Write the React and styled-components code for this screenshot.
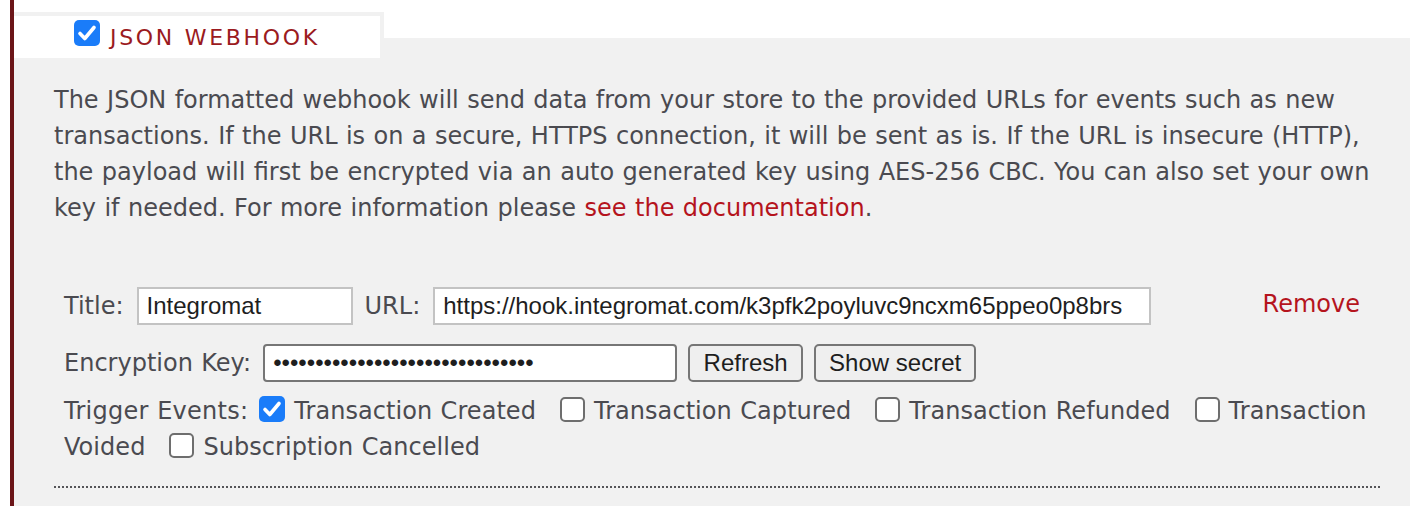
import React from 'react';
import styled, { createGlobalStyle } from 'styled-components';

const GlobalStyle = createGlobalStyle`
	html, body {
		margin: 0;
		padding: 0;
		background: #ffffff;
	}
	body {
		font-family: 'DejaVu Sans', Verdana, sans-serif;
	}
`;

const Page = styled.div`
	padding: 0 12px 0 10px;
	height: 506px;
	overflow: hidden;
`;

const Section = styled.section`
	border-left: 4px solid #6b1518;
	padding-top: 12px;
	height: 100%;
	box-sizing: border-box;
	display: flex;
	flex-direction: column;
`;

const Tab = styled.div`
	position: relative;
	z-index: 1;
	width: 306px;
	height: 38px;
	margin-bottom: -20px;
	background: #ffffff;
	border-top: 4px solid #f1f1f1;
	border-right: 4px solid #f1f1f1;
	display: flex;
	align-items: flex-start;
	padding: 4px 0 0 60px;
	box-sizing: content-box;
`;

const TabTitle = styled.span`
	color: #9b1a20;
	font-size: 22px;
	line-height: 26px;
	letter-spacing: 2.7px;
	text-transform: uppercase;
	margin-top: 5px;
`;

const Panel = styled.div`
	flex: 1;
	background: #f1f1f1;
	padding: 44px 30px 0 40px;
	color: #4a4a50;
	font-size: 24px;
	line-height: 36px;
	word-spacing: 0.8px;
`;

const Intro = styled.p`
	margin: 0 0 61px;
`;

const Link = styled.a`
	color: #b5141d;
	text-decoration: none;
`;

const Form = styled.div`
	padding-left: 10px;
	display: flex;
	flex-direction: column;
`;

const Row = styled.div`
	display: flex;
	align-items: center;
	gap: ${p => p.$gap || 12}px;
	margin-bottom: ${p => p.$mb || 0}px;
`;

const Label = styled.label`
	color: #4a4a50;
	white-space: nowrap;
	margin-right: 1px;
`;

const TextInput = styled.input`
	box-sizing: border-box;
	height: 38px;
	width: ${p => p.$w}px;
	font-family: 'Liberation Sans', Arial, sans-serif;
	font-size: 24px;
	color: #1e1e1e;
	background: #ffffff;
	padding: 0 8px;
	border: 2px solid ${p => (p.$dark ? '#767676' : '#c3c3c3')};
	border-radius: ${p => (p.$dark ? 4 : 0)}px;
	outline: none;
`;

const Button = styled.button`
	box-sizing: border-box;
	height: 38px;
	width: ${p => p.$w}px;
	padding: 0;
	font-family: 'Liberation Sans', Arial, sans-serif;
	font-size: 24px;
	color: #1e1e1e;
	background: #efefef;
	border: 2px solid #767676;
	border-radius: 5px;
`;

const Remove = styled.a`
	margin-left: auto;
	margin-right: 20px;
	color: #b5141d;
	text-decoration: none;
	margin-top: -4px;
`;

const Events = styled.div`
	margin-top: 11px;
	color: #4a4a50;
	letter-spacing: 0.05px;
`;

const EventsLabel = styled.span`
	letter-spacing: 0.25px;
`;

const Event = styled.label`
	margin-right: 13px;
`;

const Box = styled.span`
	display: inline-block;
	box-sizing: border-box;
	width: ${p => (p.$on ? 26 : 25)}px;
	height: ${p => (p.$on ? 26 : 25)}px;
	vertical-align: -3px;
	margin: 0 9px 0 11px;
	border-radius: 5px;
	background: ${p => (p.$on ? '#1a7cf9' : '#ffffff')};
	border: ${p => (p.$on ? 'none' : '2px solid #6e6e6e')};
	svg {
		display: block;
	}
`;

const TabBox = styled(Box)`
	margin: 0 10px 0 0;
	vertical-align: 0;
`;

const Divider = styled.hr`
	margin: 21px 0 0;
	border: none;
	border-top: 2px dotted #555558;
	height: 0;
`;

const Tick = () => (
	<svg width="26" height="26" viewBox="0 0 26 26">
		<path d="M6 13.5 L10.8 18.5 L20 7.5" fill="none" stroke="#fff" strokeWidth="3.6" strokeLinecap="round" strokeLinejoin="round" />
	</svg>
);

const Check = ({ on }) => <Box $on={on}>{on && <Tick />}</Box>;

const events = [
	{ label: 'Transaction Created', on: true },
	{ label: 'Transaction Captured', on: false },
	{ label: 'Transaction Refunded', on: false },
	{ label: 'Transaction Voided', on: false },
	{ label: 'Subscription Cancelled', on: false }
];

const App = () => (
	<Page>
		<GlobalStyle />
		<Section>
			<Tab>
				<TabBox $on>
					<Tick />
				</TabBox>
				<TabTitle>JSON Webhook</TabTitle>
			</Tab>
			<Panel>
				<Intro>
					The JSON formatted webhook will send data from your store to the provided URLs for events such as new
					transactions. If the URL is on a secure, HTTPS connection, it will be sent as is. If the URL is insecure
					(HTTP), the payload will first be encrypted via an auto generated key using AES-256 CBC. You can also set
					your own key if needed. For more information please <Link href="#">see the documentation</Link>.
				</Intro>
				<Form>
					<Row $mb={19}>
						<Label>Title:</Label>
						<TextInput $w={216} defaultValue="Integromat" />
						<Label>URL:</Label>
						<TextInput $w={718} defaultValue="https://hook.integromat.com/k3pfk2poyluvc9ncxm65ppeo0p8brs" />
						<Remove href="#">Remove</Remove>
					</Row>
					<Row $gap={11}>
						<Label>Encryption Key:</Label>
						<TextInput $w={414} $dark type="password" defaultValue="abcdefghijklmnopqrstuvwxyz12345" />
						<Button $w={115}>Refresh</Button>
						<Button $w={162}>Show secret</Button>
					</Row>
					<Events>
						<EventsLabel>Trigger Events:</EventsLabel>
						{events.map(({ label, on }) => (
							<Event key={label}>
								<Check on={on} />
								{label}
							</Event>
						))}
					</Events>
				</Form>
				<Divider />
			</Panel>
		</Section>
	</Page>
);

export default App;
